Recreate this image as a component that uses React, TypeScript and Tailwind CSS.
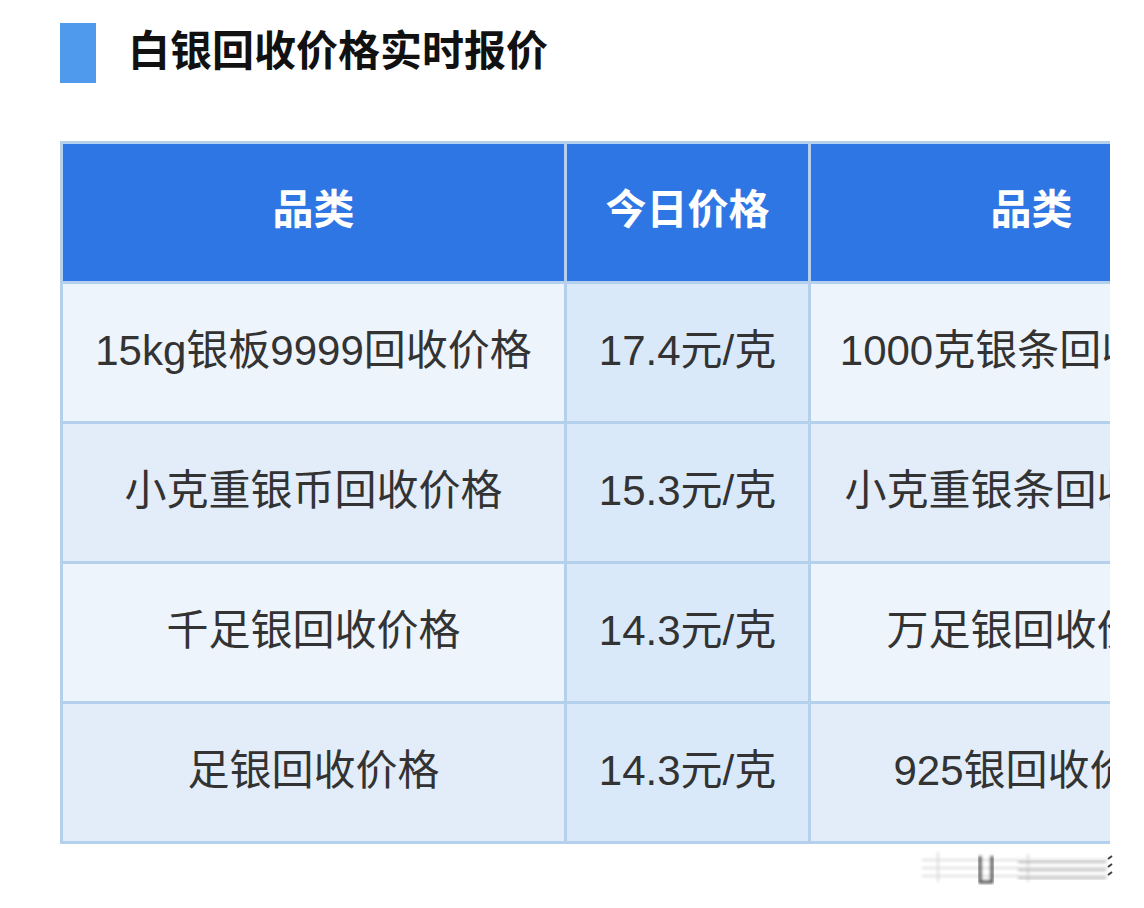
const rows = [
  { name: '15kg银板9999回收价格', price: '17.4元/克', other: '1000克银条回收价格', light: true },
  { name: '小克重银币回收价格', price: '15.3元/克', other: '小克重银条回收价格', light: false },
  { name: '千足银回收价格', price: '14.3元/克', other: '万足银回收价格', light: true },
  { name: '足银回收价格', price: '14.3元/克', other: '925银回收价格', light: false },
]

function Watermark() {
  return (
    <svg className="absolute left-[918px] top-[846px] opacity-80" width="200" height="44" viewBox="0 0 200 44">
      <defs>
        <filter id="blur">
          <feGaussianBlur stdDeviation="1.6" />
        </filter>
      </defs>
      <g filter="url(#blur)" stroke="#d4d4d4" strokeWidth="2" fill="none">
        <line x1="4" y1="14" x2="190" y2="14" />
        <line x1="4" y1="22" x2="190" y2="22" />
        <line x1="4" y1="30" x2="190" y2="30" />
        <line x1="20" y1="6" x2="20" y2="36" />
        <line x1="110" y1="8" x2="110" y2="36" />
      </g>
      <g filter="url(#blur)" stroke="#8a8a8a" strokeWidth="1.5" fill="none">
        <path d="M100 16 H188" />
        <path d="M100 24 H188" />
        <path d="M100 32 H188" />
      </g>
      <path d="M62 10 V36 H74 V10" stroke="#222" strokeWidth="3" fill="none" filter="url(#blur)" />
      <path d="M190 13 l4 -3 M190 21 l4 -3 M190 29 l4 -3" stroke="#111" strokeWidth="2" fill="none" />
    </svg>
  )
}

export default function App() {
  return (
    <div
      className="relative w-[1144px] h-[908px] bg-white overflow-hidden"
      style={{ fontFamily: '"Liberation Sans", "Noto Sans CJK SC", sans-serif' }}
    >
      <div className="flex items-center pt-[23px] pl-[60px] gap-[32px]">
        <div className="w-[36px] h-[60px] bg-[#4f9aec]" />
        <h1 className="text-[42px] leading-[60px] font-bold text-[#111] -mt-[2px]">白银回收价格实时报价</h1>
      </div>

      <div className="mt-[58px] ml-[60px] w-[1050px] overflow-hidden">
        <div className="w-[1250px] border-[3px] border-[#b5d0ec]">
          <div className="flex h-[140px] bg-[#2f76e5] border-b-[3px] border-[#b5d0ec] text-white font-bold text-[41px]">
            <div className="w-[504px] flex items-center justify-center border-r-[3px] border-[#b5d0ec] -mt-[4px]">品类</div>
            <div className="w-[244px] flex items-center justify-center border-r-[3px] border-[#b5d0ec] -mt-[4px]">今日价格</div>
            <div className="w-[432px] flex items-center justify-center border-r-[3px] border-[#b5d0ec] pl-[12px] -mt-[4px]">品类</div>
            <div className="flex-1" />
          </div>
          {rows.map((r, i) => (
            <div
              key={r.name}
              className={
                'flex text-[42px] text-[#333] ' +
                (i < rows.length - 1 ? 'h-[140px] border-b-[3px] border-[#b5d0ec] ' : 'h-[137px] ') +
                (r.light ? 'bg-[#edf4fc]' : 'bg-[#e2edf9]')
              }
            >
              <div className="w-[504px] flex items-center justify-center border-r-[3px] border-[#b5d0ec] whitespace-nowrap pb-[4px]">{r.name}</div>
              <div className="w-[244px] flex items-center justify-center border-r-[3px] border-[#b5d0ec] bg-[#dae9f9] whitespace-nowrap pb-[4px]">{r.price}</div>
              <div className="w-[432px] flex items-center justify-center border-r-[3px] border-[#b5d0ec] whitespace-nowrap pb-[4px] pl-[16px]">{r.other}</div>
              <div className="flex-1" />
            </div>
          ))}
        </div>
      </div>

      <Watermark />
    </div>
  )
}
